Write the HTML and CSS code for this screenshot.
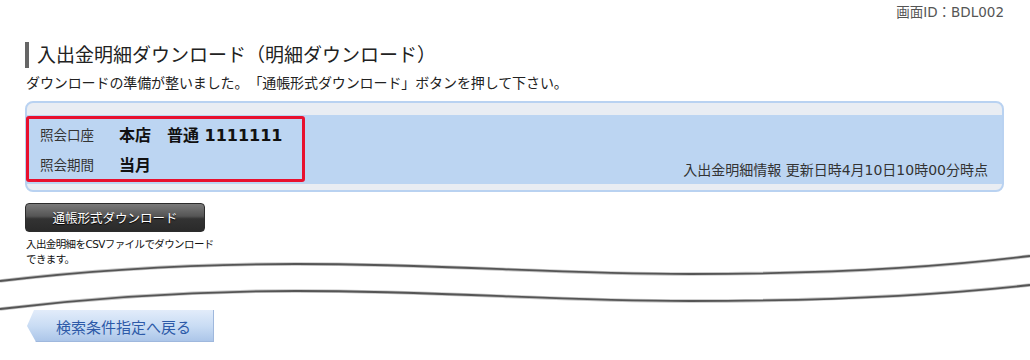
FILE: index.html
```html
<!DOCTYPE html>
<html lang="ja">
<head>
<meta charset="utf-8">
<title>入出金明細ダウンロード</title>
<link rel="stylesheet" href="styles.css">
</head>
<body>
<div class="page">
  <div class="screen-id">画面ID：BDL002</div>
  <div class="content">
    <h1 class="title">入出金明細ダウンロード（明細ダウンロード）</h1>
    <p class="lead">ダウンロードの準備が整いました。「通帳形式ダウンロード」ボタンを押して下さい。</p>
    <div class="info">
      <div class="info-body">
        <div class="account">
          <div class="row"><span class="label">照会口座</span><span class="value">本店　普通 1111111</span></div>
          <div class="row"><span class="label">照会期間</span><span class="value">当月</span></div>
        </div>
        <div class="updated">入出金明細情報 更新日時4月10日10時00分時点</div>
      </div>
    </div>
    <button class="dl-btn" type="button">通帳形式ダウンロード</button>
    <p class="note">入出金明細をCSVファイルでダウンロード<br>できます。</p>
  </div>
  <svg class="waves" viewBox="0 0 1030 58" width="1030" height="58" aria-hidden="true">
    <path class="glow" d="M0,30 C100,18 200,13 296,13 C450,13 550,23 690,23 C850,23 950,15 1030,5"/>
    <path class="line" d="M0,30 C100,18 200,13 296,13 C450,13 550,23 690,23 C850,23 950,15 1030,5"/>
    <path class="glow" d="M0,58 C100,46 200,40 296,40 C450,40 550,50 690,50 C850,50 950,43 1030,34"/>
    <path class="line" d="M0,58 C100,46 200,40 296,40 C450,40 550,50 690,50 C850,50 950,43 1030,34"/>
  </svg>
  <div class="content">
    <button class="back-btn" type="button">検索条件指定へ戻る</button>
  </div>
</div>
</body>
</html>
```
FILE: styles.css
```css
html, body {
  margin: 0;
  padding: 0;
  background: #ffffff;
}
body {
  font-family: "DejaVu Sans", "Noto Sans CJK JP", sans-serif;
  color: #222;
  width: 1030px;
  height: 360px;
  overflow: hidden;
  text-spacing-trim: space-all;
}
.page {
  width: 1030px;
}
.screen-id {
  height: 24px;
  line-height: 24px;
  font-size: 13.5px;
  color: #555;
  text-align: right;
  padding-right: 26px;
}
.content {
  padding: 0 26px 0 25px;
}
.title {
  margin: 18px 0 0 0;
  height: 26px;
  line-height: 26px;
  border-left: 4px solid #666;
  padding-left: 8px;
  font-size: 19px;
  font-weight: normal;
  color: #222;
}
.lead {
  margin: 6px 0 0 1px;
  font-size: 14px;
  line-height: 18px;
  color: #222;
  letter-spacing: -0.1px;
}
.info {
  margin-top: 9px;
  border: 2px solid #b9d2f1;
  border-radius: 8px;
  background: #e9edf3;
  padding: 12px 0 6px 0;
}
.info-body {
  background: #bcd5f2;
  height: 69px;
  display: flex;
  justify-content: space-between;
  align-items: flex-end;
}
.account {
  align-self: flex-start;
  margin: 1px 0 0 -1px;
  width: 262px;
  height: 60px;
  border: 3px solid #e8102e;
  border-radius: 3px;
  padding-left: 11px;
  display: flex;
  flex-direction: column;
  justify-content: center;
}
.row {
  display: flex;
  align-items: center;
  height: 31px;
}
.label {
  width: 79px;
  font-size: 13.5px;
  color: #333;
}
.value {
  font-size: 16px;
  font-weight: bold;
  color: #111;
}
.updated {
  font-size: 14px;
  color: #333;
  padding: 0 14px 5px 0;
}
.dl-btn {
  display: block;
  margin-top: 11px;
  width: 180px;
  height: 29px;
  border: 1px solid #2c2c2c;
  border-radius: 4px;
  background: linear-gradient(to bottom, #7a7a7a 0%, #555 45%, #333 55%, #2a2a2a 100%);
  color: #fff;
  font-family: "DejaVu Sans", "Noto Sans CJK JP", sans-serif;
  font-size: 12.5px;
  text-shadow: 0 1px 1px #000;
  padding: 0;
}
.note {
  margin: 5px 0 0 1px;
  font-size: 10.5px;
  line-height: 15px;
  color: #111;
  letter-spacing: -0.6px;
}
.waves {
  display: block;
  margin-top: -16px;
  overflow: visible;
}
.waves .glow {
  fill: none;
  stroke: #c4c4c4;
  stroke-width: 3.5;
}
.waves .line {
  fill: none;
  stroke: #555;
  stroke-width: 1.8;
}
.back-btn {
  display: block;
  margin: 1px 0 0 2px;
  width: 187px;
  height: 32px;
  border: none;
  padding: 0 0 0 6px;
  background: linear-gradient(to bottom, #e2ecfa 0%, #c9dcf4 50%, #aac4e8 100%);
  clip-path: polygon(7px 0, 100% 0, 100% 100%, 9px 100%, 0 50%);
  color: #2d5aa8;
  font-family: "DejaVu Sans", "Noto Sans CJK JP", sans-serif;
  font-size: 15px;
  text-align: center;
  box-shadow: inset -1px -1px 0 #9fb8dd;
}
```
